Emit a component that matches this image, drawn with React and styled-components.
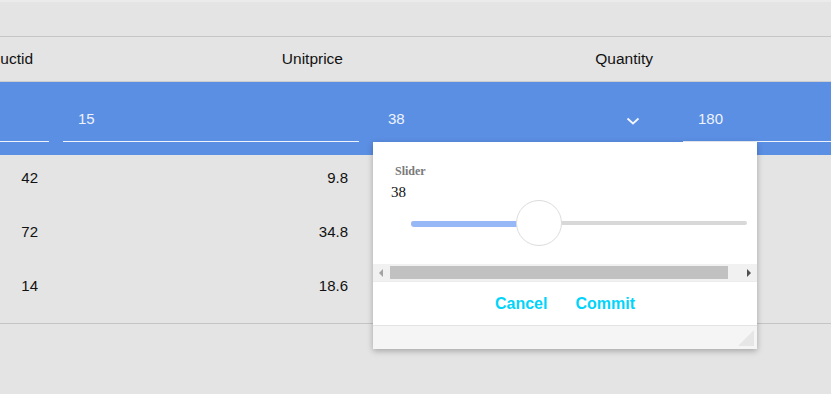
import React from "react";
import styled, { createGlobalStyle } from "styled-components";

const GlobalStyle = createGlobalStyle`
  html, body {
    margin: 0;
    padding: 0;
    background: #e4e4e4;
    font-family: "Liberation Sans", Arial, sans-serif;
    overflow: hidden;
  }
`;

const COL = 310;

const rows = [
  { productid: 42, unitprice: 9.8, quantity: 12 },
  { productid: 72, unitprice: 34.8, quantity: 10 },
  { productid: 14, unitprice: 18.6, quantity: 9 },
];

const App = () => {
  const value = 38;
  return (
    <>
      <GlobalStyle />
      <Page>
        <Toolbar />
        <Table>
          <HeaderRow>
            <HeaderCell>Productid</HeaderCell>
            <HeaderCell>Unitprice</HeaderCell>
            <HeaderCell>Quantity</HeaderCell>
            <HeaderCell>Discount</HeaderCell>
          </HeaderRow>
          <EditRow>
            <Editor>
              <EditText>11</EditText>
            </Editor>
            <Editor>
              <EditText>15</EditText>
            </Editor>
            <Editor nounderline>
              <EditText>38</EditText>
              <Chevron viewBox="0 0 14 8">
                <path d="M1.5 1.5 L7 6.5 L12.5 1.5" fill="none" stroke="#f4f7fd" strokeWidth="1.8" />
              </Chevron>
              <Popup>
                <PopupBody>
                  <SliderLabel>Slider</SliderLabel>
                  <SliderValue>{value}</SliderValue>
                  <Track>
                    <TrackFill style={{ width: `${value}%` }} />
                    <Thumb style={{ left: `${value}%` }} />
                  </Track>
                </PopupBody>
                <ScrollBar>
                  <ScrollArrow>
                    <svg width="5" height="8" viewBox="0 0 5 8">
                      <path d="M4 0 L0 4 L4 8 Z" fill="#a3a3a3" />
                    </svg>
                  </ScrollArrow>
                  <ScrollThumb />
                  <ScrollArrow>
                    <svg width="5" height="8" viewBox="0 0 5 8">
                      <path d="M1 0 L5 4 L1 8 Z" fill="#505050" />
                    </svg>
                  </ScrollArrow>
                </ScrollBar>
                <Footer>
                  <ActionButton>Cancel</ActionButton>
                  <ActionButton>Commit</ActionButton>
                </Footer>
                <StatusBar>
                  <Grip />
                </StatusBar>
              </Popup>
            </Editor>
            <Editor>
              <EditText>180</EditText>
            </Editor>
          </EditRow>
          <Body>
            {rows.map((r) => (
              <DataRow key={r.productid}>
                <DataCell>{r.productid}</DataCell>
                <DataCell>{r.unitprice}</DataCell>
                <DataCell>{r.quantity}</DataCell>
                <DataCell>0</DataCell>
              </DataRow>
            ))}
          </Body>
        </Table>
      </Page>
    </>
  );
};

export default App;

const Page = styled.div`
  width: 831px;
  height: 394px;
  background: #e4e4e4;
  overflow: hidden;
`;

const Toolbar = styled.div`
  height: 34px;
  border-top: 2px solid #ebebeb;
  border-bottom: 1px solid #c6c6c6;
`;

const Table = styled.div`
  margin-left: -254px;
  width: ${COL * 4}px;
`;

const Grid = styled.div`
  display: grid;
  grid-template-columns: repeat(4, ${COL}px);
`;

const HeaderRow = styled(Grid)`
  height: 44px;
  border-bottom: 1px solid #cdcdcd;
  align-items: center;
`;

const HeaderCell = styled.div`
  text-align: right;
  padding-right: 23px;
  font-size: 15.5px;
  color: #111;
`;

const EditRow = styled(Grid)`
  height: 73px;
  background: #5b8fe4;
  align-items: start;
`;

const Editor = styled.div`
  position: relative;
  margin: 20px 7px 0;
  height: 39px;
  display: flex;
  align-items: center;
  justify-content: space-between;
  padding-right: 29px;
  border-bottom: 1px solid ${(p) => (p.nounderline ? "transparent" : "#eef2fb")};
`;

const EditText = styled.span`
  padding-left: 15px;
  padding-bottom: 6px;
  font-size: 15px;
  color: #eef3fc;
`;

const Chevron = styled.svg`
  width: 14px;
  height: 8px;
  margin-bottom: 2px;
`;

const Popup = styled.div`
  position: absolute;
  left: 0;
  top: 40px;
  width: 384px;
  background: #fff;
  box-shadow: 0 2px 6px rgba(0, 0, 0, 0.28);
  z-index: 5;
  display: flex;
  flex-direction: column;
`;

const PopupBody = styled.div`
  height: 122px;
  padding: 22px 0 0 0;
  box-sizing: border-box;
`;

const SliderLabel = styled.div`
  padding-left: 22px;
  font-family: "Liberation Serif", "Times New Roman", serif;
  font-weight: bold;
  font-size: 12px;
  line-height: 14px;
  color: #7a7a7a;
`;

const SliderValue = styled.div`
  padding-left: 18px;
  margin-top: 6px;
  font-family: "Liberation Serif", "Times New Roman", serif;
  font-size: 15px;
  line-height: 17px;
  color: #111;
`;

const Track = styled.div`
  position: relative;
  margin: 21px 0 0 38px;
  width: 336px;
  height: 4px;
  border-radius: 2px;
  background: #d8d8d8;
`;

const TrackFill = styled.div`
  height: 6px;
  margin-top: -1px;
  border-radius: 3px;
  background: #96b8f7;
`;

const Thumb = styled.div`
  position: absolute;
  top: 50%;
  width: 44px;
  height: 44px;
  margin: -23px 0 0 -23px;
  border-radius: 50%;
  background: #fff;
  border: 1px solid #dcdcdc;
`;

const ScrollBar = styled.div`
  height: 17px;
  background: #f1f1f1;
  display: flex;
  align-items: center;
`;

const ScrollArrow = styled.div`
  width: 17px;
  height: 17px;
  display: flex;
  align-items: center;
  justify-content: center;
`;

const ScrollThumb = styled.div`
  width: 338px;
  height: 13px;
  background: #c1c1c1;
  margin-right: 12px;
`;

const Footer = styled.div`
  height: 43px;
  border-top: 1px solid #ececec;
  display: flex;
  align-items: center;
  justify-content: center;
  gap: 28px;
`;

const ActionButton = styled.button`
  border: none;
  background: none;
  padding: 0;
  font-family: "Liberation Sans", Arial, sans-serif;
  font-weight: bold;
  font-size: 16px;
  color: #00d4fb;
  cursor: pointer;
`;

const StatusBar = styled.div`
  position: relative;
  height: 23px;
  border-top: 1px solid #e3e3e3;
  background: #f5f5f5;
`;

const Grip = styled.div`
  position: absolute;
  right: 3px;
  bottom: 3px;
  width: 0;
  height: 0;
  border-left: 16px solid transparent;
  border-bottom: 16px solid #e6e6e6;
`;

const Body = styled.div`
  padding-bottom: 6px;
  border-bottom: 1px solid #c4c4c4;
`;

const DataRow = styled(Grid)`
  height: 54px;
  box-sizing: border-box;
  padding-top: 14px;
  align-items: start;
`;

const DataCell = styled.div`
  text-align: right;
  padding-right: 18px;
  font-size: 15px;
  line-height: 17px;
  color: #111;
`;
